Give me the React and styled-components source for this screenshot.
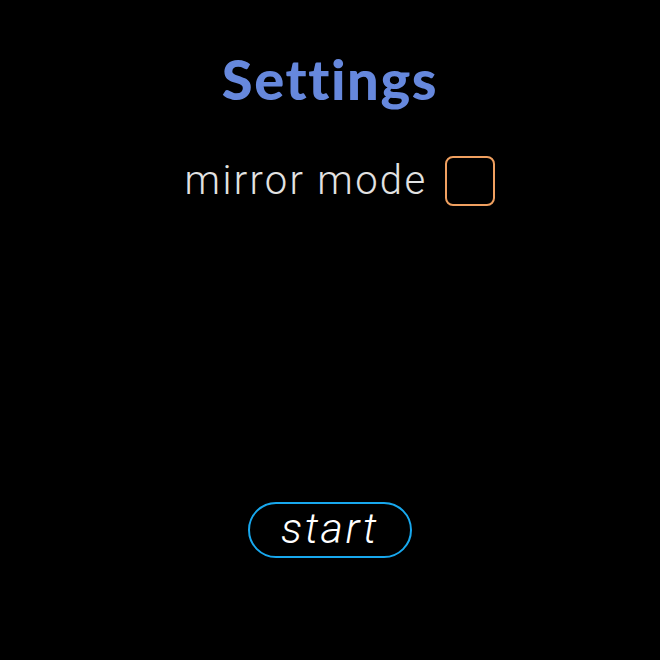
import React, { useState } from "react";
import styled, { createGlobalStyle } from "styled-components";

const Global = createGlobalStyle`
  html, body { margin: 0; padding: 0; background: #000; }
  #root { min-height: 100vh; }
`;

const Page = styled.div`
  width: 660px;
  height: 660px;
  background: #000;
  display: flex;
  flex-direction: column;
  align-items: center;
  box-sizing: border-box;
  padding-top: 48px;
`;

const Title = styled.h1`
  margin: 0;
  font-family: "Lato", "Open Sans", sans-serif;
  font-weight: 900;
  font-size: 56px;
  line-height: 62px;
  color: #6688dd;
  letter-spacing: 1.6px;
`;

const Row = styled.label`
  margin-top: 46px;
  margin-left: 20px;
  display: flex;
  align-items: center;
  gap: 18px;
  cursor: pointer;
`;

const Label = styled.span`
  font-family: "Roboto", "Noto Sans", sans-serif;
  font-weight: 300;
  font-size: 40px;
  line-height: 50px;
  color: #e2e2e2;
  letter-spacing: 2.3px;
`;

const Box = styled.span`
  width: 46px;
  height: 46px;
  border: 2px solid #f0a060;
  border-radius: 8px;
  background: ${(p) => (p.$checked ? "#f0a060" : "transparent")};
`;

const Spacer = styled.div`
  flex: 1;
`;

const StartButton = styled.button`
  margin-bottom: 102px;
  width: 164px;
  height: 56px;
  border: 2px solid #18a8ee;
  border-radius: 28px;
  background: transparent;
  color: #fff;
  font-family: "Roboto", "Noto Sans", sans-serif;
  font-style: italic;
  font-weight: 300;
  font-size: 43px;
  line-height: 1;
  letter-spacing: 2.5px;
  padding: 0 0 4px 0;
  cursor: pointer;
`;

export default function App() {
  const [mirror, setMirror] = useState(false);
  return (
    <>
      <Global />
      <Page>
        <Title>Settings</Title>
        <Row onClick={() => setMirror(!mirror)}>
          <Label>mirror mode</Label>
          <Box $checked={mirror} />
        </Row>
        <Spacer />
        <StartButton>start</StartButton>
      </Page>
    </>
  );
}
